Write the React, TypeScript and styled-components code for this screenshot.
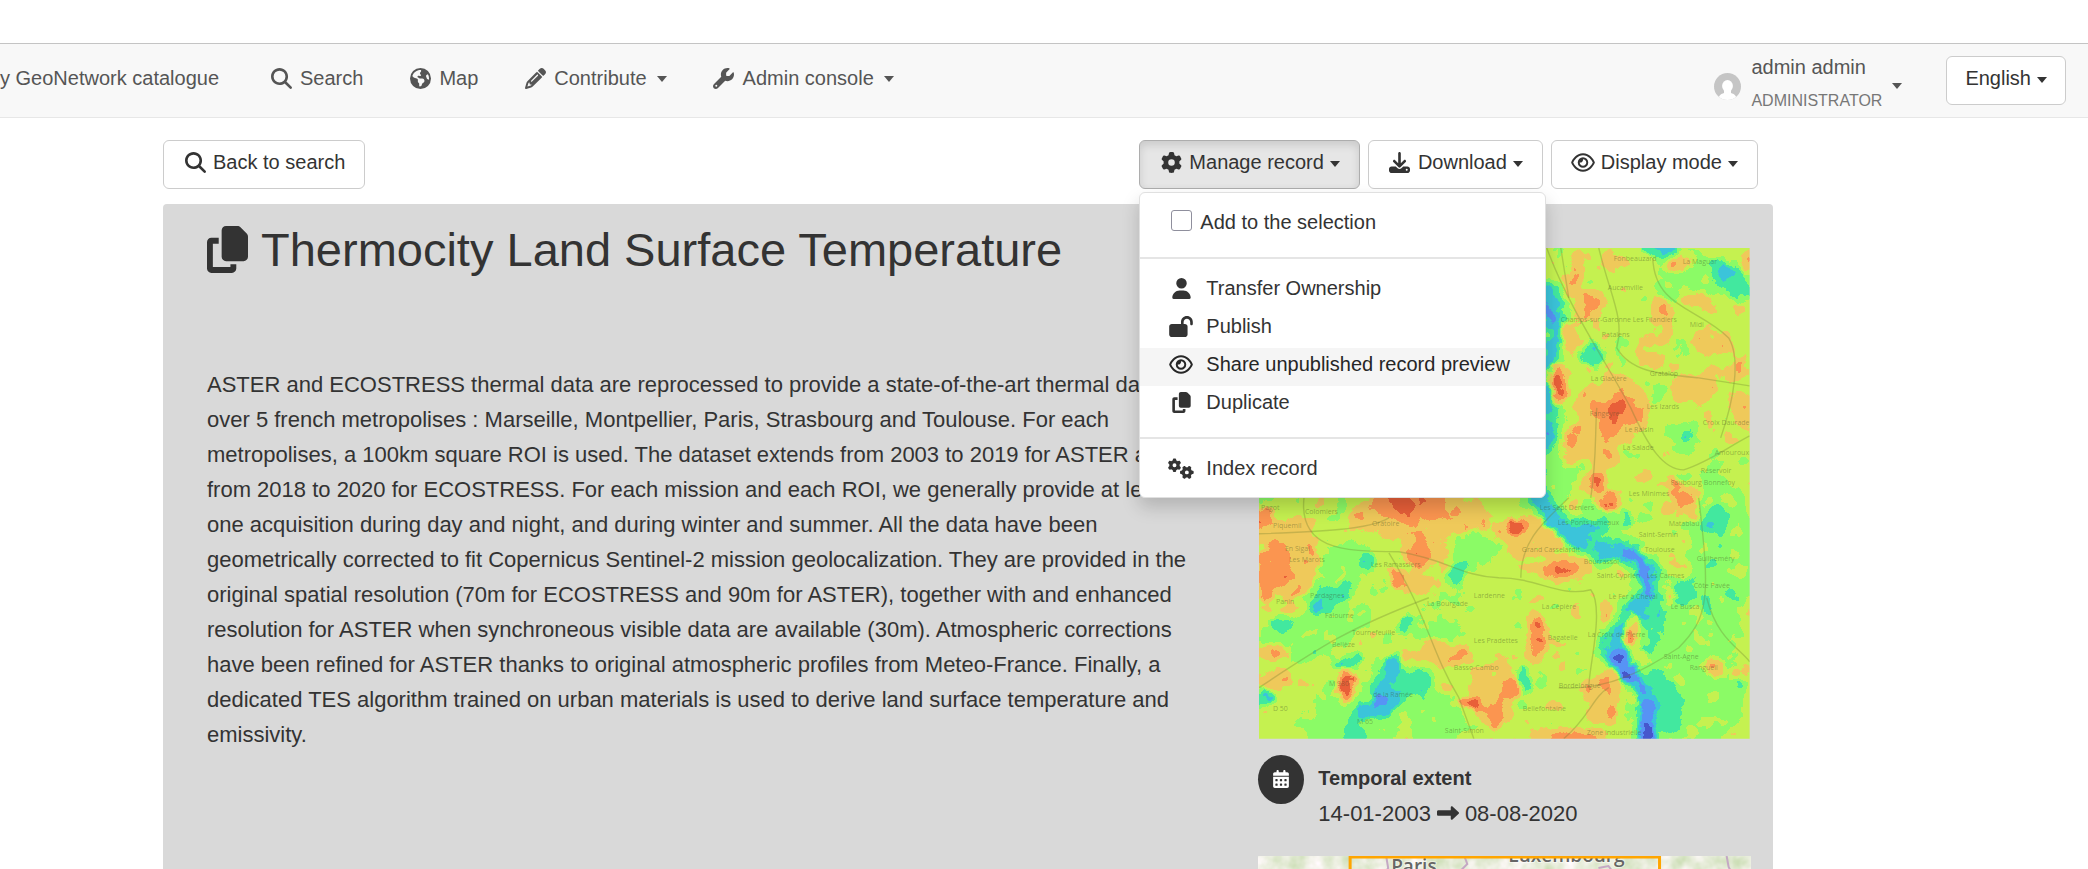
import React from "react";
import styled, { createGlobalStyle, css } from "styled-components";
import {
  FaMagnifyingGlass,
  FaEarthAmericas,
  FaPencil,
  FaWrench,
  FaGear,
  FaDownload,
  FaRegEye,
  FaUser,
  FaLockOpen,
  FaCopy,
  FaGears,
  FaCalendarDays,
  FaRightLong,
} from "react-icons/fa6";

const GlobalStyle = createGlobalStyle`
  *, *::before, *::after { box-sizing: border-box; }
  body { margin: 0; background: #fff; }
  body, button, input {
    font-family: "Liberation Sans", Arial, sans-serif;
    font-size: 20px;
    line-height: 30px;
    color: #333;
  }
`;

const Page = styled.div`
  display: flex;
  flex-direction: column;
  height: 100vh;
  overflow: hidden;
`;

const Navbar = styled.nav`
  display: flex;
  flex: none;
  justify-content: space-between;
  align-items: flex-start;
  margin-top: 43px;
  height: 75px;
  padding: 1px 22px 0 0;
  background: #f8f8f8;
  border-top: 1px solid #c4c4c4;
  border-bottom: 1px solid #e7e7e7;
  color: #555;
`;

const NavGroup = styled.div`
  display: flex;
  align-items: flex-start;
`;

const NavLink = styled.a<{ $brand?: boolean }>`
  display: flex;
  align-items: center;
  gap: 6px;
  height: 30px;
  margin-top: 18px;
  padding: 0 22px;
  color: #555;
  text-decoration: none;
  white-space: nowrap;
  ${(p) => p.$brand && css`padding: 0 27px 0 0;`}
`;

const FixedIcon = styled.span<{ $glyph?: number }>`
  display: inline-flex;
  flex: none;
  justify-content: center;
  align-items: center;
  width: 26px;
  height: 30px;
  svg { flex: none; width: ${(p) => p.$glyph ?? 21}px; height: 21px; }
`;

const Caret = styled.span`
  flex: none;
  width: 0;
  height: 0;
  margin: 2px 0 0 4px;
  border: 5px solid transparent;
  border-top: 6px solid currentColor;
  border-bottom: 0;
`;

const UserLink = styled.a`
  display: flex;
  align-items: center;
  gap: 10px;
  height: 75px;
  padding: 7px 22px 0;
  color: #555;
  text-decoration: none;
  ${Caret} { margin: 0; }
`;

const UserText = styled.span`
  display: flex;
  flex-direction: column;
  gap: 4px;
  margin-top: -4px;
  small { font-size: 16px; color: #777; }
`;

const Avatar = styled.svg`
  width: 27px;
  height: 27px;
`;

const Button = styled.button<{ $pressed?: boolean }>`
  display: inline-flex;
  align-items: flex-start;
  gap: 5px;
  height: 49px;
  padding: 6px 19px 0 18px;
  background: #fff;
  border: 1px solid #ccc;
  border-radius: 6px;
  white-space: nowrap;
  ${(p) => p.$pressed && css`
    background: #e6e6e6;
    border-color: #adadad;
    box-shadow: inset 0 4px 8px rgba(0, 0, 0, 0.125);
  `}
  ${Caret} { margin: 14px 0 0 1px; }
`;

const LanguageButton = styled(Button)`
  margin: 11px 0 0 22px;
  padding: 6px 18px 0;
`;

const Main = styled.main`
  display: flex;
  flex: 1;
  flex-direction: column;
  min-height: 0;
  padding: 22px 315px 0 163px;
`;

const Toolbar = styled.div`
  display: flex;
  flex: none;
  justify-content: space-between;
  padding-right: 15px;
`;

const Actions = styled.div`
  display: flex;
  gap: 8px;
`;

const Dropdown = styled.div`
  position: relative;
`;

const Menu = styled.div`
  position: absolute;
  z-index: 2;
  top: 52px;
  left: 0;
  width: 407px;
  padding: 13px 0 7px;
  background: #fff;
  border: 1px solid #e0e0e0;
  border-radius: 6px;
  box-shadow: 0 9px 18px rgba(0, 0, 0, 0.175);
  hr {
    height: 2px;
    margin: 13px 0;
    border: 0;
    background: #e5e5e5;
  }
`;

const MenuItem = styled.button<{ $active?: boolean }>`
  display: flex;
  align-items: center;
  gap: 12px;
  width: 100%;
  height: 38px;
  padding: 0 28px 6px;
  border: 0;
  background: ${(p) => (p.$active ? "#f5f5f5" : "transparent")};
  color: ${(p) => (p.$active ? "#262626" : "#333")};
  white-space: nowrap;
`;

const CheckItem = styled.label`
  display: flex;
  align-items: center;
  gap: 8px;
  height: 38px;
  padding: 0 31px 6px;
`;

const Checkbox = styled.input`
  appearance: none;
  width: 21px;
  height: 21px;
  margin: 0 0 4px;
  background: #fff;
  border: 1px solid #8f8f9d;
  border-radius: 3px;
`;

const Record = styled.article`
  display: grid;
  flex: 1;
  grid-template-columns: 2fr 1fr;
  gap: 66px;
  min-height: 0;
  margin-top: 15px;
  padding: 0 22px 0 44px;
  background: #d9d9d9;
  border-radius: 4px 4px 0 0;
`;

const Title = styled.h1`
  display: flex;
  align-items: center;
  gap: 13px;
  height: 56px;
  margin: 18px 0 89px;
  font-size: 47px;
  font-weight: 400;
  line-height: 56px;
  white-space: nowrap;
`;

const TitleIcon = styled(FaCopy)`
  flex: none;
  width: 41px;
  height: 47px;
  margin-bottom: 2px;
`;

const Abstract = styled.p`
  margin: 0;
  font-size: 22px;
  line-height: 35px;
`;

const Aside = styled.aside`
  padding-top: 44px;
`;

const Overview = styled.svg`
  display: block;
  width: calc(100% - 2px);
  margin: 0 1px;
  aspect-ratio: 1;
`;

const Extent = styled.section`
  display: flex;
  gap: 14px;
  margin: 16px 0 25px;
`;

const Badge = styled.span`
  display: flex;
  flex: none;
  justify-content: center;
  align-items: center;
  width: 46px;
  height: 49px;
  border-radius: 50%;
  background: #333;
  color: #fff;
  font-size: 18px;
`;

const ExtentText = styled.div`
  padding-top: 6px;
  line-height: 35px;
  h2, p { margin: 0; }
  h2 { font-size: 20px; }
  p { display: flex; align-items: center; gap: 6px; font-size: 22px; }
  svg { width: 22px; height: 22px; }
`;

const LocationMap = styled.svg`
  display: block;
  width: 100%;
  height: 300px;
`;

/* Colour ramp of the temperature image, coldest class first. */
const ramp = [
  [72, 88, 205], [88, 148, 245], [60, 196, 218], [66, 232, 160], [140, 252, 102],
  [198, 242, 80], [240, 202, 90], [252, 150, 80], [232, 96, 58],
];
const channel = (c: number) => ramp.map((v) => (v[c] / 255).toFixed(3)).join(" ");
const shade = (level: number) => {
  const v = Math.round(((level + 0.5) / 9) * 255);
  return `rgb(${v},${v},${v})`;
};

/* x, y, rx, ry, rotation, temperature class */
type Blob = [number, number, number, number, number, number];
const plains: Blob[] = [
  [70, 325, 45, 26, -25, 4.2], [60, 385, 60, 22, -20, 4.2], [110, 460, 70, 38, -20, 4.1],
  [180, 370, 30, 20, -40, 4.3], [175, 470, 30, 30, 0, 4.2], [463, 300, 34, 70, 0, 4.1],
  [430, 440, 58, 60, 0, 4.2], [445, 380, 40, 40, 0, 4.3], [215, 300, 26, 22, -50, 4.2],
  [440, 25, 50, 20, 20, 4.3], [425, 190, 18, 18, 0, 4.2], [399, 145, 8, 9, 0, 4],
  [424, 102, 7, 10, 0, 4], [408, 44, 16, 8, 35, 3.9], [455, 235, 14, 24, 0, 4.4],
  [350, 265, 30, 14, 10, 4.2], [300, 220, 18, 34, 0, 4.2], [305, 10, 8, 40, -25, 4.2],
];
const spots: Blob[] = [
  // warm halos
  [30, 318, 30, 34, 10, 6.1], [20, 285, 36, 14, -10, 6], [160, 268, 70, 24, 0, 6.1],
  [162, 300, 20, 22, 0, 6.2], [157, 334, 26, 12, 20, 6], [272, 288, 36, 20, 0, 6.1],
  [306, 320, 30, 14, 0, 6.1], [279, 392, 12, 24, 0, 6.2], [235, 446, 24, 34, 0, 6.1],
  [188, 405, 24, 12, 10, 6.1], [344, 450, 18, 26, 20, 6.2], [311, 488, 38, 10, 0, 6.2],
  [15, 405, 18, 8, 0, 6.1], [16, 432, 16, 9, -15, 6.1], [88, 438, 12, 16, 0, 6.3],
  [346, 362, 8, 10, 0, 6.3], [425, 252, 10, 26, -25, 6.4], [349, 254, 14, 10, 0, 6.2],
  [456, 419, 10, 10, 0, 6.1], [482, 425, 10, 7, 0, 6.1], [331, 56, 15, 16, 0, 6.3],
  [317, 28, 9, 22, 10, 6.2], [313, 89, 8, 12, 0, 6.2], [297, 135, 12, 21, 0, 6.6],
  [354, 162, 38, 34, -10, 6.2], [320, 196, 18, 22, 20, 6.2], [345, 200, 16, 22, 0, 6.2],
  [438, 52, 13, 9, 0, 6.3], [421, 15, 16, 8, -20, 6.1], [402, 62, 12, 16, -20, 6.1],
  [408, 86, 10, 13, 0, 6.1], [448, 92, 9, 17, -10, 6.2], [469, 95, 8, 14, -20, 6.2],
  [458, 62, 10, 6, 0, 6], [434, 141, 24, 15, 0, 6.1], [458, 125, 16, 7, 0, 6.1],
  [480, 119, 9, 13, 0, 6.3], [484, 161, 14, 20, 0, 6.2], [358, 12, 16, 9, 0, 6],
  [338, 235, 12, 14, 0, 6.2], [392, 112, 14, 8, 0, 6], [489, 15, 5, 8, 0, 6.2],
  // hot cores
  [14, 322, 15, 31, 15, 7.2], [3, 270, 8, 10, 0, 7.1], [142, 258, 32, 18, 10, 7.1],
  [186, 258, 16, 16, 0, 7.1], [160, 302, 9, 20, 0, 7.2], [257, 279, 9, 9, 0, 7.8],
  [138, 330, 6, 9, -15, 7.3], [301, 323, 14, 5, 0, 7.1], [279, 390, 7, 16, 0, 7.5],
  [88, 437, 6, 11, 10, 8.6], [210, 457, 10, 6, 20, 7.7], [239, 464, 7, 20, 10, 7.2],
  [251, 443, 6, 10, 0, 7.4], [354, 466, 4, 9, 0, 7.6], [315, 490, 22, 6, 0, 7.3],
  [349, 254, 7, 6, 0, 7.7], [331, 55, 5, 8, -20, 7.4], [316, 28, 4, 9, 10, 7.3],
  [297, 136, 7, 13, 0, 8], [358, 164, 26, 14, 10, 7.2], [349, 178, 9, 12, 0, 7.3],
  [314, 188, 6, 8, 20, 7.2], [480, 119, 4, 7, 0, 7.6], [338, 236, 4, 7, 0, 7.4],
  [416, 236, 5, 8, -20, 7.3], [356, 164, 5, 6, 0, 8.2],
  // cold spots
  [74, 350, 25, 10, -35, 2.9], [22, 375, 14, 6, 0, 2.9], [91, 414, 17, 6, -10, 2.9],
  [133, 438, 20, 24, 20, 2.9], [153, 435, 18, 13, 0, 2.9], [128, 448, 10, 24, 15, 2],
  [112, 462, 15, 8, -10, 2], [135, 419, 8, 12, 20, 2], [148, 375, 12, 6, -30, 2.9],
  [198, 327, 9, 14, 20, 2.8], [108, 312, 8, 10, 0, 2.9], [95, 481, 9, 14, 0, 2.8],
  [265, 432, 7, 13, -15, 2.8], [7, 452, 10, 7, 0, 2.8], [459, 272, 12, 14, 0, 2.9],
  [428, 343, 13, 14, 0, 2.9], [449, 359, 6, 12, -15, 2.9], [369, 270, 5, 9, -20, 2.9],
  [332, 278, 20, 9, 10, 2.9], [404, 455, 18, 32, -15, 2.9], [392, 372, 14, 34, 5, 2.9],
  [470, 30, 24, 13, 30, 2.8], [485, 44, 10, 8, 0, 2.9], [465, 25, 8, 7, 0, 1.7],
  [401, 0, 18, 7, 0, 2.4], [334, 107, 13, 13, 30, 2.8], [429, 189, 6, 6, 0, 2.6],
  [472, 345, 6, 6, 0, 3],
];

const river =
  "M284 36 C300 62 300 86 288 108 C268 132 298 160 290 184 C280 214 272 228 282 254 C300 284 322 296 350 302 C378 306 390 318 391 338 C384 358 366 372 358 388 C350 406 358 420 374 430 C388 442 388 466 391 510";

const roads = [
  "M288 0 C310 60 345 110 372 160 C390 200 405 222 425 222 C450 214 468 200 491 188",
  "M302 0 L310 50", "M340 0 C352 50 366 70 358 100 C372 124 400 126 440 130 L491 138",
  "M394 10 C396 60 440 60 470 90 C482 110 476 150 462 190",
  "M0 286 C60 284 110 282 130 270", "M45 250 C40 300 80 304 140 304 C190 312 200 328 240 330 C280 330 300 350 332 342 C346 360 330 420 330 440",
  "M130 305 C170 370 170 400 200 450 L215 491", "M300 440 C350 444 390 420 420 400 C450 370 452 350 440 250",
  "M448 350 C458 390 480 400 491 414", "M262 330 C262 290 290 270 310 250", "M305 491 C330 470 335 448 350 440",
  "M338 160 C336 190 338 210 332 250", "M0 440 C60 400 90 380 170 350",
];

const places: [number, number, string][] = [
  [355, 13, "Fonbeauzard"], [424, 16, "La Maguar"], [349, 42, "Aucamville"],
  [302, 74, "Champs-sur-Garonne Les Filandiers"], [431, 79, "Midi"], [343, 89, "Ratalens"],
  [391, 128, "Gratalop"], [332, 133, "La Glacière"], [331, 168, "Fangeyre"], [388, 161, "Les Izards"],
  [444, 177, "Croix Daurade"], [366, 184, "Le Raisin"], [364, 202, "La Salade"], [456, 207, "Amouroux"],
  [442, 225, "Réservoir"], [412, 237, "Faubourg Bonnefoy"], [370, 248, "Les Minimes"],
  [46, 266, "Colomiers"], [2, 262, "Pagot"], [14, 280, "Piquemil"], [113, 278, "Oratoire"],
  [281, 262, "Les Sept Deniers"], [299, 277, "Les Ponts Jumeaux"], [410, 278, "Matabiau"],
  [380, 289, "Saint-Sernin"], [26, 303, "En Sigal"], [30, 314, "Les Marots"], [112, 319, "Les Ramassiers"],
  [263, 304, "Grand Casselardit"], [386, 304, "Toulouse"], [325, 316, "Bourrassol"], [438, 313, "Guilheméry"],
  [338, 330, "Saint-Cyprien"], [388, 330, "Les Carmes"], [51, 350, "Pardagnes"], [17, 356, "Panin"],
  [168, 358, "La Bourgade"], [215, 350, "Lardenne"], [350, 351, "Le Fer à Cheval"], [435, 340, "Côte Pavée"],
  [283, 361, "La Cépière"], [412, 361, "Le Busca"], [66, 370, "Falourne"], [93, 387, "Tournefeuille"],
  [215, 395, "Les Pradettes"], [289, 392, "Bagatelle"], [329, 389, "La Croix de Pierre"], [73, 399, "Bellèze"],
  [405, 411, "Saint-Agne"], [431, 422, "Rangueil"], [195, 422, "Basso-Cambo"], [300, 440, "Bordelongue"],
  [114, 449, "de la Ramée"], [264, 463, "Bellefontaine"], [186, 485, "Saint-Simon"], [70, 438, "M 980"],
  [14, 463, "D 50"], [98, 476, "M 65"], [328, 487, "Zone industrielle"],
];

const drawBlob = ([x, y, rx, ry, r, t]: Blob, i: number) => (
  <ellipse key={i} cx={x} cy={y} rx={rx} ry={ry} transform={`rotate(${r} ${x} ${y})`} fill={shade(t)} />
);

function ThermalImage() {
  return (
    <Overview viewBox="0 0 491 491" role="img" aria-label="Surface temperature over Toulouse">
      <defs>
        <filter id="thermal" x="-40" y="-40" width="571" height="571" filterUnits="userSpaceOnUse" colorInterpolationFilters="sRGB">
          <feGaussianBlur in="SourceGraphic" stdDeviation="2.4" result="field" />
          <feTurbulence type="fractalNoise" baseFrequency="0.06" numOctaves="4" seed="7" result="warp" />
          <feDisplacementMap in="field" in2="warp" scale="14" xChannelSelector="R" yChannelSelector="G" result="bent" />
          <feTurbulence type="fractalNoise" baseFrequency="0.045" numOctaves="3" seed="12" />
          <feColorMatrix values="1 0 0 0 0  1 0 0 0 0  1 0 0 0 0  0 0 0 0 1" result="noise" />
          <feComposite in="bent" in2="noise" operator="arithmetic" k1="0" k2="1" k3="0.26" k4="-0.13" />
          <feComponentTransfer>
            <feFuncR type="discrete" tableValues={channel(0)} />
            <feFuncG type="discrete" tableValues={channel(1)} />
            <feFuncB type="discrete" tableValues={channel(2)} />
          </feComponentTransfer>
          <feGaussianBlur stdDeviation="0.5" />
        </filter>
        <clipPath id="frame"><rect width="491" height="491" /></clipPath>
      </defs>
      <g clipPath="url(#frame)">
        <g filter="url(#thermal)">
          <rect x="-60" y="-60" width="611" height="611" fill={shade(5)} />
          {plains.map(drawBlob)}
          <path d={river} fill="none" stroke={shade(4)} strokeWidth="32" />
          {spots.map(drawBlob)}
          <path d={river} fill="none" stroke={shade(2.9)} strokeWidth="18" />
          <path d={river} fill="none" stroke={shade(2)} strokeWidth="12" />
          <path d="M286 50 L293 76" fill="none" stroke={shade(1)} strokeWidth="10" />
          <path d="M362 304 C380 306 390 318 389 350" fill="none" stroke={shade(0.9)} strokeWidth="12" />
          <path d="M360 402 L366 424 L378 424" fill="none" stroke={shade(0.9)} strokeWidth="16" />
          <path d="M387 440 L391 510" fill="none" stroke={shade(1)} strokeWidth="14" />
          <path d="M389 478 V510" stroke={shade(0)} strokeWidth="9" />
          <ellipse cx="373" cy="382" rx="8" ry="17" fill={shade(5.8)} />
          <ellipse cx="370" cy="391" rx="5" ry="5" fill={shade(8)} />
          <ellipse cx="371" cy="458" rx="6" ry="16" fill={shade(5)} />
        </g>
        <g fill="none" stroke="#6a7a30" strokeOpacity="0.3" strokeWidth="1.4">
          {roads.map((d) => <path key={d} d={d} />)}
        </g>
        <g fill="#3c4a20" fillOpacity="0.4" fontFamily="Open Sans, sans-serif" fontSize="7">
          {places.map(([x, y, name]) => <text key={name} x={x} y={y}>{name}</text>)}
        </g>
      </g>
    </Overview>
  );
}

function ExtentMap() {
  return (
    <LocationMap viewBox="0 0 492 300" preserveAspectRatio="xMidYMin slice" role="img" aria-label="Spatial extent">
      <defs>
        <filter id="land" x="0" y="0" width="100%" height="100%" colorInterpolationFilters="sRGB">
          <feTurbulence type="fractalNoise" baseFrequency="0.06" numOctaves="3" seed="4" />
          <feColorMatrix values="0.3 0 0 0 0.76  0.16 0 0 0 0.85  0.4 0 0 0 0.66  0 0 0 0 1" />
        </filter>
      </defs>
      <rect width="492" height="300" fill="#f2efe5" filter="url(#land)" />
      <g fill="none" stroke="#c4a8c4" strokeWidth="2">
        <path d="M128 0 L130 12 L124 22" /><path d="M206 0 L209 8 L203 14 L206 22" />
        <path d="M468 0 L470 11 L476 22" /><path d="M340 12 L350 10 L356 18" />
      </g>
      <g fill="#666" stroke="#fff" strokeOpacity="0.5" strokeWidth="2" paintOrder="stroke" fontFamily="Open Sans, sans-serif" fontWeight="600" fontSize="19">
        <text x="133" y="17">Paris</text>
        <text x="250" y="6">Luxembourg</text>
      </g>
      <rect x="92" y="1" width="309" height="320" fill="none" stroke="#ffa500" strokeWidth="3" />
    </LocationMap>
  );
}

export default function App() {
  return (
    <Page>
      <GlobalStyle />
      <Navbar>
        <NavGroup>
          <NavLink href="#home" $brand>y GeoNetwork catalogue</NavLink>
          <NavLink href="#search"><FixedIcon><FaMagnifyingGlass /></FixedIcon>Search</NavLink>
          <NavLink href="#map"><FixedIcon><FaEarthAmericas /></FixedIcon>Map</NavLink>
          <NavLink href="#contribute"><FixedIcon><FaPencil /></FixedIcon>Contribute<Caret /></NavLink>
          <NavLink href="#admin"><FixedIcon><FaWrench /></FixedIcon>Admin console<Caret /></NavLink>
        </NavGroup>
        <NavGroup>
          <UserLink href="#account">
            <Avatar viewBox="0 0 27 27" aria-hidden="true">
              <clipPath id="round"><circle cx="13.5" cy="13.5" r="13.5" /></clipPath>
              <g clipPath="url(#round)">
                <rect width="27" height="27" fill="#c5c5c5" />
                <ellipse cx="13.5" cy="13" rx="5.4" ry="6" fill="#fff" />
                <path d="M10 16 H17 V20 C20 21 22 22 23 27 H4 C5 22 7 21 10 20 Z" fill="#fff" />
              </g>
            </Avatar>
            <UserText>admin admin<small>ADMINISTRATOR</small></UserText>
            <Caret />
          </UserLink>
          <LanguageButton type="button">English<Caret /></LanguageButton>
        </NavGroup>
      </Navbar>
      <Main>
        <Toolbar>
          <Button type="button"><FixedIcon><FaMagnifyingGlass /></FixedIcon>Back to search</Button>
          <Actions>
            <Dropdown>
              <Button type="button" $pressed aria-expanded="true"><FixedIcon><FaGear /></FixedIcon>Manage record<Caret /></Button>
              <Menu>
                <CheckItem><Checkbox type="checkbox" />Add to the selection</CheckItem>
                <hr />
                <MenuItem type="button"><FixedIcon><FaUser /></FixedIcon>Transfer Ownership</MenuItem>
                <MenuItem type="button"><FixedIcon $glyph={24}><FaLockOpen /></FixedIcon>Publish</MenuItem>
                <MenuItem type="button" $active><FixedIcon $glyph={24}><FaRegEye /></FixedIcon>Share unpublished record preview</MenuItem>
                <MenuItem type="button"><FixedIcon><FaCopy /></FixedIcon>Duplicate</MenuItem>
                <hr />
                <MenuItem type="button"><FixedIcon $glyph={26}><FaGears /></FixedIcon>Index record</MenuItem>
              </Menu>
            </Dropdown>
            <Button type="button"><FixedIcon><FaDownload /></FixedIcon>Download<Caret /></Button>
            <Button type="button"><FixedIcon $glyph={24}><FaRegEye /></FixedIcon>Display mode<Caret /></Button>
          </Actions>
        </Toolbar>
        <Record>
          <div>
            <Title><TitleIcon />Thermocity Land Surface Temperature</Title>
            <Abstract>
              ASTER and ECOSTRESS thermal data are reprocessed to provide a state-of-the-art thermal data
              over 5 french metropolises : Marseille, Montpellier, Paris, Strasbourg and Toulouse. For each
              metropolises, a 100km square ROI is used. The dataset extends from 2003 to 2019 for ASTER and
              from 2018 to 2020 for ECOSTRESS. For each mission and each ROI, we generally provide at least
              one acquisition during day and night, and during winter and summer. All the data have been
              geometrically corrected to fit Copernicus Sentinel-2 mission geolocalization. They are provided in the
              original spatial resolution (70m for ECOSTRESS and 90m for ASTER), together with and enhanced
              resolution for ASTER when synchroneous visible data are available (30m). Atmospheric corrections
              have been refined for ASTER thanks to original atmospheric profiles from Meteo-France. Finally, a
              dedicated TES algorithm trained on urban materials is used to derive land surface temperature and
              emissivity.
            </Abstract>
          </div>
          <Aside>
            <ThermalImage />
            <Extent>
              <Badge><FaCalendarDays /></Badge>
              <ExtentText>
                <h2>Temporal extent</h2>
                <p>14-01-2003 <FaRightLong /> 08-08-2020</p>
              </ExtentText>
            </Extent>
            <ExtentMap />
          </Aside>
        </Record>
      </Main>
    </Page>
  );
}
